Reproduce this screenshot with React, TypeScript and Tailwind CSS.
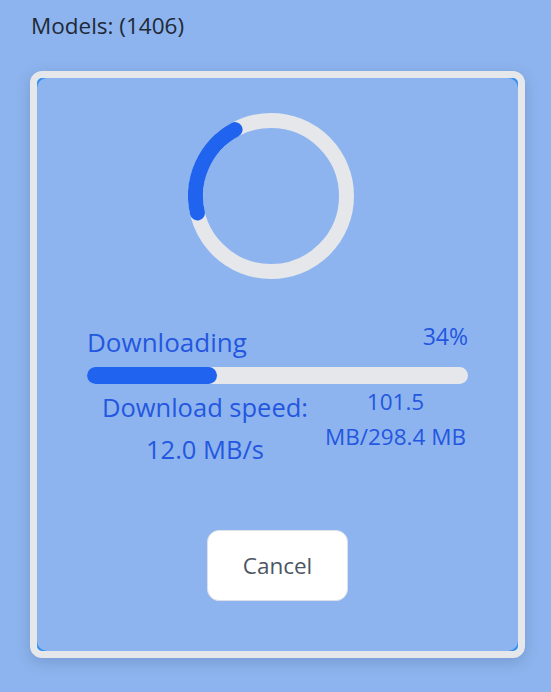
import React from 'react';

const progress = 34;

const Spinner = () => (
  <svg width="166" height="166" viewBox="0 0 166 166">
    <circle cx="83" cy="83" r="75.5" fill="none" stroke="#e5e7eb" strokeWidth="15" />
    <circle
      cx="83"
      cy="83"
      r="75.5"
      fill="none"
      stroke="#1f63ef"
      strokeWidth="15"
      strokeLinecap="round"
      strokeDasharray="98 476"
      transform="rotate(167 83 83)"
    />
  </svg>
);

export default function App() {
  return (
    <div className="min-h-screen bg-[#8db4ee] px-[30px] pt-[11px] font-['Open_Sans',sans-serif]">
      <h1 className="text-[22.5px] leading-[30px] text-[#1f2937] pl-[1px]">Models: (1406)</h1>
      <div className="mt-[30px] w-[495px] rounded-[12px] border-[7px] border-[#e5e7eb] bg-[#2f8ff0] shadow-[0_4px_14px_rgba(60,80,120,0.25)]">
        <div className="rounded-[10px] bg-[#8db4ee] px-[50px] pt-[35px] pb-[50px]">
          <div className="flex justify-center pr-[13px]">
            <Spinner />
          </div>
          <div className="mt-[45px] flex items-start justify-between text-[#2457e0]">
            <span className="text-[26px] leading-[36px]">Downloading</span>
            <span className="text-[23px] leading-[24px]">{progress}%</span>
          </div>
          <div className="mt-[7px] h-[17px] w-full rounded-full bg-[#e5e7eb]">
            <div className="h-full rounded-full bg-[#1f63ef]" style={{ width: `${progress}%` }} />
          </div>
          <div className="flex text-[#2457e0]">
            <div className="w-[236px] pt-[2px] text-center text-[25.5px] leading-[42px]">
              Download speed:
              <br />
              12.0 MB/s
            </div>
            <div className="flex-1 text-center text-[22.5px] leading-[35px]">
              101.5
              <br />
              MB/298.4 MB
            </div>
          </div>
          <div className="mt-[60px] flex justify-center">
            <button className="h-[71px] w-[141px] rounded-[12px] border border-[#dde1e7] bg-white text-[22.5px] text-[#4b5563]">
              Cancel
            </button>
          </div>
        </div>
      </div>
    </div>
  );
}
